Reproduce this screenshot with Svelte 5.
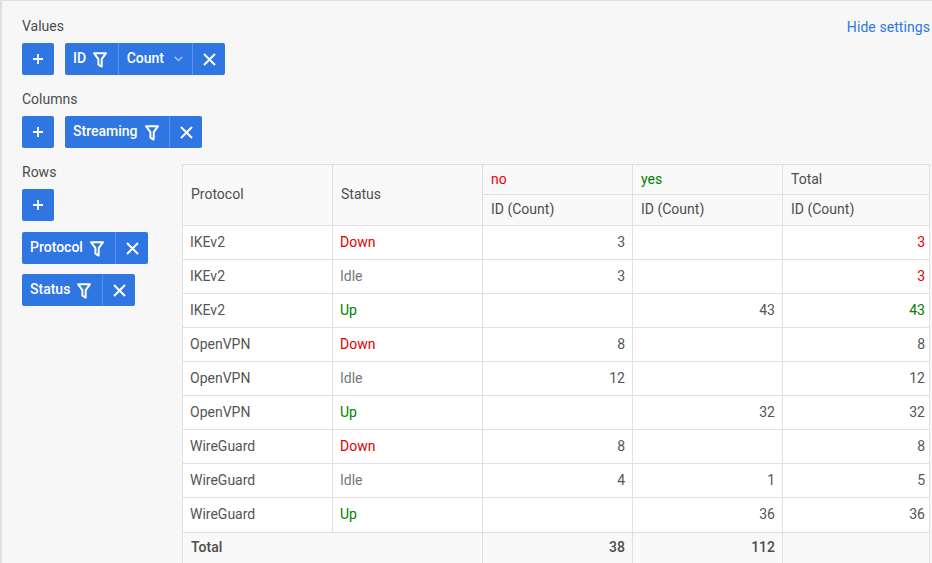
<script>
  const rows = [
    { p: 'IKEv2', s: 'Down', no: 3, yes: '', total: 3, tc: 'down' },
    { p: 'IKEv2', s: 'Idle', no: 3, yes: '', total: 3, tc: 'down' },
    { p: 'IKEv2', s: 'Up', no: '', yes: 43, total: 43, tc: 'up' },
    { p: 'OpenVPN', s: 'Down', no: 8, yes: '', total: 8, tc: '' },
    { p: 'OpenVPN', s: 'Idle', no: 12, yes: '', total: 12, tc: '' },
    { p: 'OpenVPN', s: 'Up', no: '', yes: 32, total: 32, tc: '' },
    { p: 'WireGuard', s: 'Down', no: 8, yes: '', total: 8, tc: '' },
    { p: 'WireGuard', s: 'Idle', no: 4, yes: 1, total: 5, tc: '' },
    { p: 'WireGuard', s: 'Up', no: '', yes: 36, total: 36, tc: '' }
  ];
</script>

{#snippet filter()}
  <svg class="ico-filter" viewBox="0 0 14 16" width="14" height="16">
    <path d="M1 1.2h12L8.7 7.2v7.4L5.4 12.6V7.2z" fill="none" stroke="#fff" stroke-width="2" stroke-linejoin="round" />
  </svg>
{/snippet}

{#snippet close()}
  <button class="seg x" aria-label="Remove">
    <svg viewBox="0 0 13 13" width="13" height="13">
      <path d="M1 1l11 11M12 1L1 12" stroke="#fff" stroke-width="2" fill="none" />
    </svg>
  </button>
{/snippet}

{#snippet add()}
  <button class="add" aria-label="Add">
    <svg viewBox="0 0 10 10" width="10" height="10">
      <path d="M5 0v10M0 5h10" stroke="#fff" stroke-width="1.8" fill="none" />
    </svg>
  </button>
{/snippet}

{#snippet field(name)}
  <div class="chip">
    <div class="seg name"><span class="lbl">{name}</span>{@render filter()}</div>
    {@render close()}
  </div>
{/snippet}

<div class="page">
  <a class="hide" href="#top">Hide settings</a>

  <section class="group">
    <h4>Values</h4>
    <div class="line">
      {@render add()}
      <div class="chip">
        <div class="seg name"><span class="lbl">ID</span>{@render filter()}</div>
        <div class="seg agg">
          <span class="lbl">Count</span>
          <svg viewBox="0 0 9 6" width="9" height="6"><path d="M.8 1l3.7 3.6L8.2 1" stroke="#a9c5f3" stroke-width="1.4" fill="none" /></svg>
        </div>
        {@render close()}
      </div>
    </div>
  </section>

  <section class="group">
    <h4>Columns</h4>
    <div class="line">
      {@render add()}
      {@render field('Streaming')}
    </div>
  </section>

  <div class="bottom">
    <section class="group rows">
      <h4>Rows</h4>
      {@render add()}
      {@render field('Protocol')}
      {@render field('Status')}
    </section>

    <table>
      <colgroup>
        <col style="width:150px" /><col style="width:150px" /><col style="width:150px" /><col style="width:150px" /><col style="width:147px" />
      </colgroup>
      <thead>
        <tr class="h1">
          <th rowspan="2">Protocol</th>
          <th rowspan="2">Status</th>
          <th class="down">no</th>
          <th class="up">yes</th>
          <th>Total</th>
        </tr>
        <tr class="h2">
          <th>ID (Count)</th>
          <th>ID (Count)</th>
          <th>ID (Count)</th>
        </tr>
      </thead>
      <tbody>
        {#each rows as r}
          <tr>
            <td>{r.p}</td>
            <td class={r.s === 'Down' ? 'down' : r.s === 'Up' ? 'up' : 'idle'}>{r.s}</td>
            <td class="num">{r.no}</td>
            <td class="num">{r.yes}</td>
            <td class="num last {r.tc}">{r.total}</td>
          </tr>
        {/each}
      </tbody>
      <tfoot>
        <tr>
          <td colspan="2">Total</td>
          <td class="num">38</td>
          <td class="num">112</td>
          <td></td>
        </tr>
      </tfoot>
    </table>
  </div>
</div>

<style>
  :global(body) {
    margin: 0;
    overflow: hidden;
  }
  .page {
    position: relative;
    box-sizing: border-box;
    height: 563px;
    overflow: hidden;
    background: #f7f7f7;
    border-top: 1px solid #e0e0e0;
    border-left: 2px solid #e0e0e0;
    padding: 15px 2px 0 20px;
    font-family: Roboto, "Liberation Sans", sans-serif;
    font-size: 14px;
    color: #555;
  }
  .hide {
    position: absolute;
    top: 18px;
    right: 2px;
    color: #2f76e2;
    text-decoration: none;
    line-height: 17px;
    letter-spacing: 0.07px;
  }
  h4 {
    margin: 0;
    font-size: 14px;
    font-weight: 400;
    line-height: 20px;
    color: #4d4d4d;
  }
  .group {
    margin-bottom: 14px;
  }
  .line {
    display: flex;
    gap: 11px;
    margin-top: 7px;
  }
  .add {
    display: flex;
    align-items: center;
    justify-content: center;
    width: 32px;
    height: 32px;
    padding: 0;
    border: 0;
    border-radius: 2px;
    background: #2f76e2;
  }
  .chip {
    display: flex;
    width: max-content;
    height: 32px;
    border-radius: 2px;
    background: #2f76e2;
    color: #fff;
    font-weight: 500;
  }
  .seg {
    display: flex;
    align-items: center;
    box-sizing: border-box;
    height: 32px;
    padding: 0;
    border: 0;
    background: none;
  }
  .seg + .seg {
    border-left: 1px solid #5a93ea;
  }
  .lbl {
    position: relative;
    top: -1px;
  }
  .name {
    padding: 0 10.6px 0 8px;
    gap: 7px;
  }
  .ico-filter {
    display: block;
    position: relative;
    top: 1px;
  }
  .agg {
    padding: 0 9px 0 8px;
    gap: 10px;
  }
  .x {
    width: 33px;
    padding-left: 1px;
    justify-content: center;
  }
  .bottom {
    display: flex;
    gap: 34px;
  }
  .rows {
    width: 126px;
    flex: none;
    margin: 0;
  }
  .rows h4 {
    margin-bottom: 7px;
  }
  .rows .chip {
    margin-top: 10px;
  }
  .rows .add + .chip {
    margin-top: 11px;
  }
  table {
    width: 747px;
    flex: none;
    table-layout: fixed;
    border-collapse: collapse;
    align-self: flex-start;
    margin-top: 2px;
    background: #fff;
  }
  th, td {
    box-sizing: border-box;
    border: 1px solid #e0e0e0;
    padding: 0 7px 2px;
    font-weight: 400;
    text-align: left;
    line-height: 16px;
  }
  thead th, tfoot td {
    background: #f9f9f9;
    color: #4d4d4d;
  }
  .h1 th {
    height: 30px;
    padding-left: 8px;
  }
  .h2 th {
    height: 31px;
    padding-left: 8px;
  }
  tbody td {
    height: 34px;
  }
  tbody tr:last-child td {
    height: 35px;
    padding-bottom: 3px;
  }
  tfoot td {
    height: 32px;
    padding-left: 8px;
    padding-bottom: 4px;
    font-weight: 500;
  }
  .num {
    text-align: right;
    padding-right: 7px;
  }
  .last {
    padding-right: 4px;
  }
  .down { color: #e00000; }
  thead .down { color: #f00000; }
  .up { color: #008000; }
  thead .up { color: #008000; }
  .idle { color: #777; }
</style>
